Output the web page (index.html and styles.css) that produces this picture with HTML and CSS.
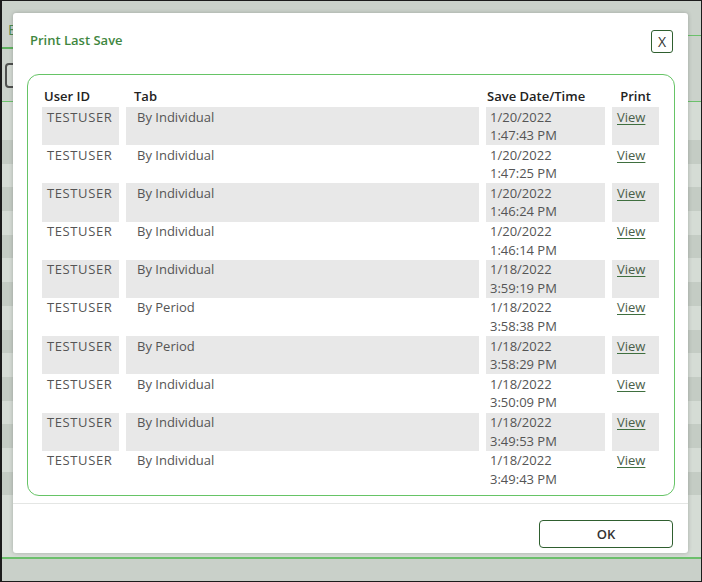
FILE: index.html
```html
<!DOCTYPE html>
<html>
<head>
<meta charset="utf-8">
<link rel="stylesheet" href="styles.css">
</head>
<body>
<div class="screen">
  <div class="bg">
    <div class="bg-top">
      <div class="bg-tab">E</div>
      <div class="bg-topright"></div>
    </div>
    <div class="bg-toolbar"><span class="bg-btn"></span></div>
    <div class="bg-rows">
      <div class="bg-row light head"></div>
      <div class="bg-row dark"></div><div class="bg-row light"></div>
      <div class="bg-row dark"></div><div class="bg-row light"></div>
      <div class="bg-row dark"></div><div class="bg-row light"></div>
      <div class="bg-row dark"></div><div class="bg-row light"></div>
      <div class="bg-row dark"></div><div class="bg-row light"></div>
      <div class="bg-row dark"></div><div class="bg-row light"></div>
      <div class="bg-row dark"></div><div class="bg-row light"></div>
      <div class="bg-row dark"></div>
      <div class="bg-row light tail"></div>
    </div>
    <div class="bg-foot"></div>
  </div>

  <div class="modal">
    <div class="modal-head">
      <div class="modal-title">Print Last Save</div>
      <button class="close-btn">X</button>
    </div>
    <div class="modal-body">
      <table class="saves">
        <colgroup>
          <col class="c-user"><col class="c-tab"><col class="c-date"><col class="c-print">
        </colgroup>
        <thead>
          <tr>
            <th class="h-user">User ID</th>
            <th class="h-tab">Tab</th>
            <th class="h-date">Save Date/Time</th>
            <th class="h-print">Print</th>
          </tr>
        </thead>
        <tbody>
          <tr class="shade"><td class="d-user">TESTUSER</td><td class="d-tab">By Individual</td><td class="d-date">1/20/2022<br>1:47:43 PM</td><td class="d-print"><a href="#">View</a></td></tr>
          <tr><td class="d-user">TESTUSER</td><td class="d-tab">By Individual</td><td class="d-date">1/20/2022<br>1:47:25 PM</td><td class="d-print"><a href="#">View</a></td></tr>
          <tr class="shade"><td class="d-user">TESTUSER</td><td class="d-tab">By Individual</td><td class="d-date">1/20/2022<br>1:46:24 PM</td><td class="d-print"><a href="#">View</a></td></tr>
          <tr><td class="d-user">TESTUSER</td><td class="d-tab">By Individual</td><td class="d-date">1/20/2022<br>1:46:14 PM</td><td class="d-print"><a href="#">View</a></td></tr>
          <tr class="shade"><td class="d-user">TESTUSER</td><td class="d-tab">By Individual</td><td class="d-date">1/18/2022<br>3:59:19 PM</td><td class="d-print"><a href="#">View</a></td></tr>
          <tr><td class="d-user">TESTUSER</td><td class="d-tab">By Period</td><td class="d-date">1/18/2022<br>3:58:38 PM</td><td class="d-print"><a href="#">View</a></td></tr>
          <tr class="shade"><td class="d-user">TESTUSER</td><td class="d-tab">By Period</td><td class="d-date">1/18/2022<br>3:58:29 PM</td><td class="d-print"><a href="#">View</a></td></tr>
          <tr><td class="d-user">TESTUSER</td><td class="d-tab">By Individual</td><td class="d-date">1/18/2022<br>3:50:09 PM</td><td class="d-print"><a href="#">View</a></td></tr>
          <tr class="shade"><td class="d-user">TESTUSER</td><td class="d-tab">By Individual</td><td class="d-date">1/18/2022<br>3:49:53 PM</td><td class="d-print"><a href="#">View</a></td></tr>
          <tr><td class="d-user">TESTUSER</td><td class="d-tab">By Individual</td><td class="d-date">1/18/2022<br>3:49:43 PM</td><td class="d-print"><a href="#">View</a></td></tr>
        </tbody>
      </table>
    </div>
    <div class="modal-foot">
      <button class="ok-btn">OK</button>
    </div>
  </div>
</div>
</body>
</html>
```

FILE: styles.css
```css
* { box-sizing: border-box; }
html, body { margin: 0; padding: 0; }
body { font-family: "Open Sans", "Liberation Sans", sans-serif; background: #fff; }

.screen {
  width: 702px;
  height: 582px;
  border: 1px solid #1c1c1c;
  border-left-width: 2px;
  position: relative;
  overflow: hidden;
  background: #cbd2cb;
}

/* background page (dimmed) */
.bg { display: flex; flex-direction: column; }
.bg-top { display: flex; align-items: flex-start; height: 48px; }
.bg-tab {
  width: 340px;
  height: 48px;
  border-bottom: 2px solid #5fb25f;
  padding: 18px 0 0 6px;
  color: #4d8a4d;
  font-size: 15px;
  line-height: 20px;
}
.bg-topright { flex: 1; height: 35px; border-bottom: 1px solid #6cc16c; }
.bg-toolbar { height: 53px; border-bottom: 1px solid #6cc16c; padding: 14px 0 0 3px; }
.bg-btn {
  display: block;
  width: 40px;
  height: 25px;
  border: 2px solid #4f514f;
  border-radius: 4px;
  background: #d3d9d3;
}
.bg-rows { display: flex; flex-direction: column; }
.bg-row { height: 23.7px; }
.bg-row.head { height: 38px; }
.bg-row.tail { height: 62px; }
.bg-row.light { background: #d5dcd5; }
.bg-row.dark { background: #c4ccc4; }
.bg-foot { height: 30px; border-top: 2px solid #6cbf6c; background: #c9d0c9; }

/* modal */
.modal {
  position: absolute;
  left: 11px;
  top: 12px;
  width: 675px;
  height: 540px;
  background: #fff;
  border-radius: 3px;
  box-shadow: 0 0 4px rgba(0, 0, 0, 0.22);
  display: flex;
  flex-direction: column;
}
.modal-head {
  display: flex;
  justify-content: space-between;
  align-items: flex-start;
  padding: 17px 15px 0 17px;
  height: 61px;
}
.modal-title {
  color: #3f873f;
  font-size: 13px;
  font-weight: 600;
  line-height: 20px;
  margin-top: 0;
}
.close-btn {
  width: 22px;
  height: 23px;
  padding: 0;
  border: 1.5px solid #2f5f2f;
  border-radius: 3px;
  background: #fff;
  color: #333;
  font-family: "Open Sans", "Liberation Sans", sans-serif;
  font-size: 14px;
  line-height: 18px;
}

.modal-body {
  margin: 0 13px 0 14px;
  height: 422px;
  border: 1px solid #66c466;
  border-radius: 12px;
  padding: 4px 8px 0 7px;
}
.saves {
  width: 100%;
  table-layout: fixed;
  border-collapse: separate;
  border-spacing: 7px 0;
  font-size: 13px;
  color: #555;
}
.c-user { width: 77px; }
.c-tab { width: 353px; }
.c-date { width: 119px; }
.c-print { width: 47px; }

.saves th {
  text-align: left;
  font-weight: 600;
  color: #222;
  padding: 8px 0 1px;
  line-height: 19px;
  white-space: nowrap;
}
.h-user { padding-left: 2px !important; }
.h-tab { padding-left: 8px !important; }
.h-date { padding-left: 1px !important; }
.saves th.h-print { text-align: center; }

.saves td {
  vertical-align: top;
  line-height: 18.6px;
  padding: 0.5px 0;
  white-space: nowrap;
}
.saves tr.shade td { background: #e8e8e8; }
.d-user { padding-left: 5px !important; letter-spacing: 0.6px; }
.d-tab { padding-left: 11px !important; }
.d-date { padding-left: 4px !important; }
.d-print { padding-left: 5px !important; }
.d-print a {
  color: #4a5e4a;
  text-decoration: underline;
  text-decoration-color: #3f6f3f;
  text-underline-offset: 2px;
}

.modal-foot {
  margin-top: 7px;
  border-top: 1px solid #e4e6e4;
  flex: 1;
  display: flex;
  justify-content: flex-end;
  align-items: flex-start;
  padding: 16px 15px 0 0;
}
.ok-btn {
  width: 134px;
  height: 28px;
  border: 1.5px solid #2f5f2f;
  border-radius: 4px;
  background: #fff;
  color: #333;
  font-family: "Open Sans", "Liberation Sans", sans-serif;
  font-size: 13px;
  font-weight: 600;
  padding: 0;
}
```
